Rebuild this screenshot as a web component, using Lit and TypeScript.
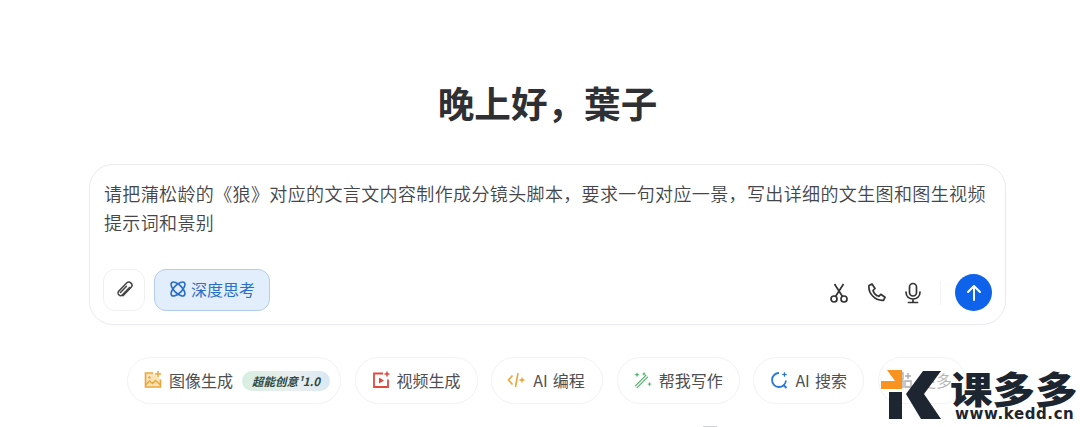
import { LitElement, html, css, svg } from "lit";
import { customElement } from "lit/decorators.js";

const chips = [
  { label: "图像生成", w: 214, badge: true, icon: svg`<path d="M10 3H2.500v14h15V9.500" fill="#fbe3b8" stroke="#eda53a" stroke-width="1.6"/><path d="M2.500 15l4-4 3 2.500 3-3 5 4.500" fill="none" stroke="#eda53a" stroke-width="1.6"/><circle cx="6.500" cy="7.500" r="1.200" fill="#eda53a"/><path d="M15 1v6M12 4h6" stroke="#eda53a" stroke-width="1.500"/>` },
  { label: "视频生成", w: 123, icon: svg`<path d="M12 3.500H3v13.500h14V9.500" fill="none" stroke="#e3493f" stroke-width="1.800"/><path d="M8 7.500l5 3-5 3z" fill="#e3493f"/><path d="M16 1.500v5M13.500 4h5" stroke="#e3493f" stroke-width="1.500"/>` },
  { label: "AI 编程", w: 112, icon: svg`<path d="M5.500 5.500L1.500 10l4 4.500" fill="none" stroke="#eda53a" stroke-width="1.600"/><path d="M11 3L8.500 17" stroke="#eda53a" stroke-width="1.600"/><path d="M15 6.500l.9 2.600 2.600.9-2.600.9-.9 2.600-.9-2.600-2.600-.9 2.600-.9z" fill="#eda53a"/>` },
  { label: "帮我写作", w: 123, icon: svg`<path d="M3 17L14 6" stroke="#4cb36a" stroke-width="3.600"/><path d="M3 17L14 6" stroke="#fff" stroke-width="1.200"/><path d="M4 7.500l.7-2 2-.7-2-.7-.7-2-.7 2-2 .7 2 .7zM16.500 16.500l.6-1.800 1.800-.6-1.800-.6-.6-1.800-.6 1.800-1.800.6 1.800.6z" fill="#4cb36a"/><path d="M11 2.500v3M9.500 4h3" stroke="#4cb36a" stroke-width="1.200"/>` },
  { label: "AI 搜索", w: 111, icon: svg`<path d="M10 3a7 7 0 1 0 7 7.500" fill="none" stroke="#2a78d8" stroke-width="1.800"/><path d="M14.500 15l3 3" stroke="#2a78d8" stroke-width="1.800"/><path d="M15.500 1.500l.8 2.200 2.200.8-2.200.8-.8 2.200-.8-2.200-2.200-.8 2.200-.8z" fill="#2a78d8"/>` },
  { label: "更多", w: 88, faint: true, icon: svg`<path d="M3 3h6v6H3zM3 11h6v6H3zM11 11h6v6h-6z" fill="none" stroke="#aaa" stroke-width="1.300"/><path d="M14 3v6M11 6h6" stroke="#aaa" stroke-width="1.300"/>` },
];

@customElement("app-root")
export class AppRoot extends LitElement {
  static styles = css`
    :host {
      display: block;
      position: relative;
      width: 1080px;
      height: 427px;
      overflow: hidden;
      background: #fff;
      font-family: "Noto Sans CJK SC", "Noto Sans", sans-serif;
      color: #333;
    }
    .page {
      display: flex;
      flex-direction: column;
      padding: 77px 74px 0 89px;
    }
    h1 {
      margin: 0;
      height: 51px;
      line-height: 51px;
      font-size: 36.6px;
      font-weight: 700;
      text-align: center;
      color: #2f3033;
    }
    .card {
      box-sizing: border-box;
      margin-top: 36px;
      height: 161px;
      border: 1px solid #e9ebee;
      border-radius: 24px;
      padding: 14px 13px 13px 14px;
      display: flex;
      flex-direction: column;
      justify-content: space-between;
      box-shadow: 0 1px 3px rgba(0, 0, 0, 0.02);
    }
    .prompt {
      margin: 0;
      font-size: 18px;
      line-height: 29px;
      letter-spacing: 0.37px;
      color: #44464a;
      font-weight: 350;
    }
    .bar {
      display: flex;
      align-items: flex-end;
    }
    .attach {
      box-sizing: border-box;
      width: 42px;
      height: 42px;
      border: 1px solid #f0f0f2;
      border-radius: 12px;
      display: flex;
      align-items: center;
      justify-content: center;
      margin-right: 9px;
      margin-left: -1px;
    }
    .think {
      box-sizing: border-box;
      height: 42px;
      width: 116px;
      padding: 0 0 2px 14px;
      background: #e2eefb;
      border: 1px solid #b2cdec;
      border-radius: 12px;
      display: flex;
      align-items: center;
      gap: 4px;
      color: #2b6fc9;
      font-size: 16px;
    }
    .think svg {
      flex: none;
    }
    .spacer {
      flex: 1;
    }
    .actions {
      display: flex;
      align-items: center;
      height: 37px;
    }
    .tool {
      width: 20px;
      height: 22px;
      margin-left: 17px;
      display: block;
    }
    .sep {
      width: 1px;
      height: 24px;
      background: #f1f2f3;
      margin: 0 14px 0 17px;
    }
    .send {
      width: 37px;
      height: 37px;
      border-radius: 50%;
      background: #0f62ea;
      display: flex;
      align-items: center;
      justify-content: center;
    }
    .chips {
      display: flex;
      gap: 13.6px;
      margin: 32px 0 0 38px;
    }
    .chip {
      box-sizing: border-box;
      height: 47px;
      border: 1px solid #f1f2f4;
      border-radius: 24px;
      display: flex;
      align-items: center;
      padding: 0 0 2px 15px;
      gap: 6px;
      font-size: 16px;
      word-spacing: 1.5px;
      color: #4d4f53;
      white-space: nowrap;
    }
    .chip.faint {
      color: #b5b6b8;
    }
    .chip svg {
      flex: none;
    }
    .badge {
      margin: 2px 0 0 3px;
      height: 20px;
      width: 88px;
      border-radius: 10px;
      background: linear-gradient(90deg, #d8eee2, #eaeef0 60%, #d8e9f2);
      font-size: 11.500px;
      line-height: 20px;
      font-style: italic;
      font-weight: 600;
      text-align: center;
      color: #2f4a44;
    }
    .clip {
      position: absolute;
      left: 703px;
      bottom: 0;
      width: 14px;
      height: 1px;
      background: #cfd0d2;
    }
    .logo {
      position: absolute;
      left: 881px;
      top: 369px;
      width: 199px;
      height: 58px;
    }
    .mark {
      position: absolute;
      left: 0;
      top: 0;
    }
    .brand {
      position: absolute;
      left: 69px;
      top: 2px;
      font-size: 37px;
      line-height: 35px;
      font-weight: 900;
      letter-spacing: 0;
      color: #1c2530;
      white-space: nowrap;
      transform: scaleX(1.15);
      transform-origin: left center;
    }
    .url {
      position: absolute;
      left: 74px;
      top: 38px;
      font-family: "DejaVu Sans", sans-serif;
      font-size: 15px;
      line-height: 14px;
      font-weight: 700;
      letter-spacing: 0.6px;
      color: #1c2530;
      white-space: nowrap;
    }
  `;

  render() {
    return html`
      <div class="page">
        <h1>晚上好，葉子</h1>
        <div class="card">
          <p class="prompt">请把蒲松龄的《狼》对应的文言文内容制作成分镜头脚本，要求一句对应一景，写出详细的文生图和图生视频提示词和景别</p>
          <div class="bar">
            <div class="attach">
              <svg width="20" height="20" viewBox="0 0 20 20" fill="none" stroke="#444" stroke-width="1.500" stroke-linecap="round">
                <path d="M15.500 7.500l-7 7.300a2.600 2.600 0 0 1-3.700-3.700l7.800-8a3.100 3.100 0 0 1 4.400 4.400l-8 8.200"/>
                <path d="M12.500 6.300l-6 6.200"/>
              </svg>
            </div>
            <div class="think">
              <svg width="18" height="18" viewBox="0 0 18 18" fill="none" stroke="#2b6fc9" stroke-width="1.700">
                <ellipse cx="9" cy="9" rx="9" ry="4" transform="rotate(45 9 9)"/>
                <ellipse cx="9" cy="9" rx="9" ry="4" transform="rotate(-45 9 9)"/>
              </svg>
              <span>深度思考</span>
            </div>
            <div class="spacer"></div>
            <div class="actions">
              <svg class="tool" viewBox="0 0 20 22" fill="none" stroke="#333" stroke-width="1.700">
                <circle cx="5" cy="17" r="3"/><circle cx="15" cy="17" r="3"/>
                <path d="M6.500 14.500L14.500 2M13.500 14.500L5.500 2"/>
              </svg>
              <svg class="tool" viewBox="0 0 20 22" fill="none" stroke="#333" stroke-width="1.700" stroke-linejoin="round">
                <path d="M3 3.500l3-1.500 3 4.500-2 2c.8 2.800 3 5 5.800 5.800l2-2 4.200 3-1.500 3C9 19 2 11 3 3.500z"/>
              </svg>
              <svg class="tool" viewBox="0 0 20 22" fill="none" stroke="#333" stroke-width="1.700" stroke-linecap="round">
                <rect x="6.500" y="1.500" width="7" height="12.500" rx="3.500"/>
                <path d="M3 10c0 4.500 3 7 7 7s7-2.500 7-7M10 17v3.500M5.500 20.500h9"/>
              </svg>
              <div class="sep"></div>
              <div class="send">
                <svg width="18" height="18" viewBox="0 0 18 18" fill="none" stroke="#fff" stroke-width="2" stroke-linecap="round" stroke-linejoin="round">
                  <path d="M9 16V2.500M3 8l6-6 6 6"/>
                </svg>
              </div>
            </div>
          </div>
        </div>
        <div class="chips">
          ${chips.map(
            (c) => html`<div class="chip ${c.faint ? "faint" : ""}" style="width:${c.w}px">
              <svg width="20" height="20" viewBox="0 0 20 20">${c.icon}</svg>
              <span>${c.label}</span>
              ${c.badge ? html`<span class="badge">超能创意¹1.0</span>` : ""}
            </div>`
          )}
        </div>
      </div>
      <div class="clip"></div>
      <div class="logo">
        <svg class="mark" width="70" height="52" viewBox="0 0 70 52">
          <path d="M6 1H21V20H0V12H14z" fill="#f7931e"/>
          <path d="M8 23h13v27H8z" fill="#1c2530"/>
          <path d="M42 2h18L43 25l17 25H40L25 25z" fill="#1c2530"/>
        </svg>
        <span class="brand">课多多</span>
        <span class="url">www.kedd.cn</span>
      </div>
    `;
  }
}
